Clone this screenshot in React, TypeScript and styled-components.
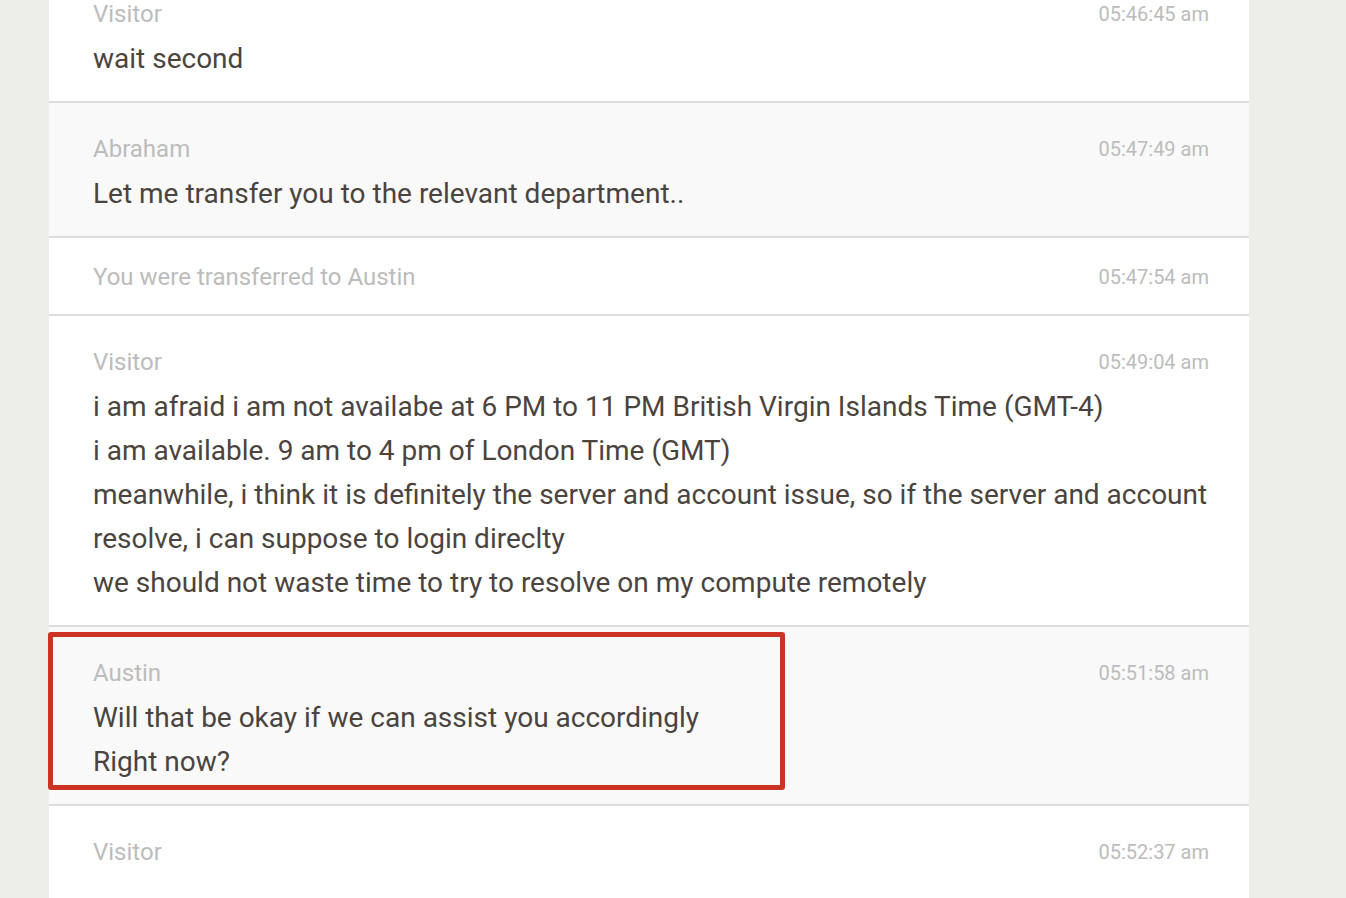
import React from "react";
import styled, { createGlobalStyle } from "styled-components";

const Global = createGlobalStyle`
  html, body { margin: 0; padding: 0; background: #eeeee9; overflow: hidden; }
  body { font-family: Roboto, "Liberation Sans", sans-serif; }
`;

const Page = styled.div`
  display: flex;
  justify-content: flex-start;
  padding-left: 49px;
  margin-top: -32px;
`;

const Panel = styled.div`
  width: 1200px;
  min-height: calc(100vh + 60px);
  background: #ffffff;
  display: flex;
  flex-direction: column;
`;

const Row = styled.div<{ $alt?: boolean; $system?: boolean }>`
  position: relative;
  display: flex;
  flex-direction: column;
  padding: ${(p) => (p.$system ? "24px 40px 22px 44px" : "31px 40px 20px 44px")};
  background: ${(p) => (p.$alt ? "#f9f9f9" : "#ffffff")};
  border-bottom: 2px solid #dddddd;

  &:last-child {
    flex: 1;
    border-bottom: none;
  }
`;

const Header = styled.div`
  display: flex;
  justify-content: space-between;
  align-items: center;
  gap: 20px;
`;

const Name = styled.div`
  font-size: 24px;
  line-height: 30px;
  color: #bcbcbc;
`;

const Lines = styled.div`
  display: flex;
  flex-direction: column;
  margin-top: 8px;
`;

const Line = styled.div`
  font-size: 28px;
  line-height: 44px;
  color: #4b443e;
`;

const Time = styled.div`
  font-size: 20px;
  line-height: 30px;
  color: #bcbcbc;
  white-space: nowrap;
`;

const Highlight = styled.div`
  position: absolute;
  left: -1px;
  top: 5px;
  width: 737px;
  height: 158px;
  box-sizing: border-box;
  border: 5px solid #cc3325;
  border-radius: 3px;
  pointer-events: none;
`;

type Msg = { name?: string; time: string; lines?: string[]; system?: string; alt?: boolean; mark?: boolean };

const messages: Msg[] = [
  { name: "Visitor", time: "05:46:45 am", lines: ["wait second"] },
  { name: "Abraham", time: "05:47:49 am", lines: ["Let me transfer you to the relevant department.."], alt: true },
  { system: "You were transferred to Austin", time: "05:47:54 am" },
  {
    name: "Visitor",
    time: "05:49:04 am",
    lines: [
      "i am afraid i am not availabe at 6 PM to 11 PM British Virgin Islands Time (GMT-4)",
      "i am available. 9 am to 4 pm of London Time (GMT)",
      "meanwhile, i think it is definitely the server and account issue, so if the server and account resolve, i can suppose to login direclty",
      "we should not waste time to try to resolve on my compute remotely",
    ],
  },
  {
    name: "Austin",
    time: "05:51:58 am",
    lines: ["Will that be okay if we can assist you accordingly", "Right now?"],
    alt: true,
    mark: true,
  },
  { name: "Visitor", time: "05:52:37 am", lines: [] },
];

export default function App() {
  return (
    <>
      <Global />
      <Page>
        <Panel>
          {messages.map((m, i) =>
            m.system ? (
              <Row key={i} $system>
                <Header>
                  <Name>{m.system}</Name>
                  <Time>{m.time}</Time>
                </Header>
              </Row>
            ) : (
              <Row key={i} $alt={m.alt}>
                <Header>
                  <Name>{m.name}</Name>
                  <Time>{m.time}</Time>
                </Header>
                {m.lines!.length > 0 && (
                  <Lines>
                    {m.lines!.map((l, j) => (
                      <Line key={j}>{l}</Line>
                    ))}
                  </Lines>
                )}
                {m.mark && <Highlight />}
              </Row>
            )
          )}
        </Panel>
      </Page>
    </>
  );
}
